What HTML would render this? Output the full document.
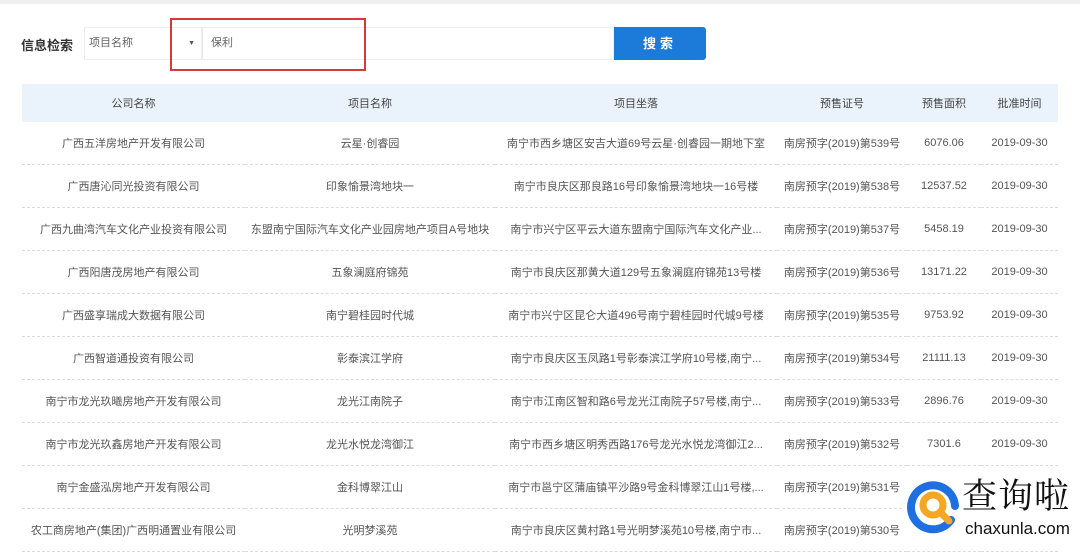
<!DOCTYPE html>
<html><head><meta charset="utf-8"><style>
body{margin:0;width:1080px;height:557px;background:#fff;overflow:hidden;font-family:"Liberation Sans","Noto Sans CJK SC",sans-serif;color:#555;position:relative}
.top{position:absolute;left:0;top:0;width:1080px;height:4px;background:#f0f0f0}
.lbl{position:absolute;left:21px;top:35px;font-size:13px;font-weight:bold;color:#333}
.sel{position:absolute;left:84px;top:27px;width:118px;height:33px;border:1px solid #eee;box-sizing:border-box;font-size:11px;color:#666;line-height:31px;padding-left:4px}
.sel span{position:absolute;right:6px;font-size:7px;color:#555}
.inp{position:absolute;left:202px;top:27px;width:412px;height:33px;border:1px solid #eee;border-left:1px solid #e6e6e6;box-sizing:border-box;font-size:11px;color:#666;line-height:31px;padding-left:8px}
.red{position:absolute;left:170px;top:18px;width:196px;height:53px;border:2px solid #d9363e;box-sizing:border-box}
.btn{position:absolute;left:614px;top:27px;width:92px;height:33px;background:#1c7ad9;border-radius:0 3px 3px 0;color:#fff;font-size:13px;font-weight:bold;text-align:center;line-height:33px;letter-spacing:4px}
table{position:absolute;left:22px;top:84px;width:1036px;border-collapse:collapse;font-size:11px}
th{background:#eaf3fb;height:38px;font-weight:normal;color:#444;padding:0}
td{height:42px;text-align:center;border-bottom:1px dashed #ddd;color:#555;padding:0;white-space:nowrap;overflow:hidden}
.logo{position:absolute;left:902px;top:468px;width:178px;height:80px;background:#fff;white-space:nowrap}
</style></head><body>
<div class="top"></div>
<div class="lbl">信息检索</div>
<div class="sel">项目名称<span>▼</span></div>
<div class="inp">保利</div>
<div class="red"></div>
<div class="btn">搜索</div>
<table>
<colgroup><col style="width:223px"><col style="width:250px"><col style="width:282px"><col style="width:130px"><col style="width:74px"><col style="width:77px"></colgroup>
<tr><th>公司名称</th><th>项目名称</th><th>项目坐落</th><th>预售证号</th><th>预售面积</th><th>批准时间</th></tr>
<tr><td>广西五洋房地产开发有限公司</td><td>云星·创睿园</td><td>南宁市西乡塘区安吉大道69号云星·创睿园一期地下室</td><td>南房预字(2019)第539号</td><td>6076.06</td><td>2019-09-30</td></tr>
<tr><td>广西唐沁同光投资有限公司</td><td>印象愉景湾地块一</td><td>南宁市良庆区那良路16号印象愉景湾地块一16号楼</td><td>南房预字(2019)第538号</td><td>12537.52</td><td>2019-09-30</td></tr>
<tr><td>广西九曲湾汽车文化产业投资有限公司</td><td>东盟南宁国际汽车文化产业园房地产项目A号地块</td><td>南宁市兴宁区平云大道东盟南宁国际汽车文化产业...</td><td>南房预字(2019)第537号</td><td>5458.19</td><td>2019-09-30</td></tr>
<tr><td>广西阳唐茂房地产有限公司</td><td>五象澜庭府锦苑</td><td>南宁市良庆区那黄大道129号五象澜庭府锦苑13号楼</td><td>南房预字(2019)第536号</td><td>13171.22</td><td>2019-09-30</td></tr>
<tr><td>广西盛享瑞成大数据有限公司</td><td>南宁碧桂园时代城</td><td>南宁市兴宁区昆仑大道496号南宁碧桂园时代城9号楼</td><td>南房预字(2019)第535号</td><td>9753.92</td><td>2019-09-30</td></tr>
<tr><td>广西智道通投资有限公司</td><td>彰泰滨江学府</td><td>南宁市良庆区玉凤路1号彰泰滨江学府10号楼,南宁...</td><td>南房预字(2019)第534号</td><td>21111.13</td><td>2019-09-30</td></tr>
<tr><td>南宁市龙光玖曦房地产开发有限公司</td><td>龙光江南院子</td><td>南宁市江南区智和路6号龙光江南院子57号楼,南宁...</td><td>南房预字(2019)第533号</td><td>2896.76</td><td>2019-09-30</td></tr>
<tr><td>南宁市龙光玖鑫房地产开发有限公司</td><td>龙光水悦龙湾御江</td><td>南宁市西乡塘区明秀西路176号龙光水悦龙湾御江2...</td><td>南房预字(2019)第532号</td><td>7301.6</td><td>2019-09-30</td></tr>
<tr><td>南宁金盛泓房地产开发有限公司</td><td>金科博翠江山</td><td>南宁市邕宁区蒲庙镇平沙路9号金科博翠江山1号楼,...</td><td>南房预字(2019)第531号</td><td></td><td></td></tr>
<tr><td>农工商房地产(集团)广西明通置业有限公司</td><td>光明梦溪苑</td><td>南宁市良庆区黄村路1号光明梦溪苑10号楼,南宁市...</td><td>南房预字(2019)第530号</td><td></td><td></td></tr>
</table>
<div class="logo">
<svg width="60" height="60" viewBox="0 0 60 60" style="position:absolute;left:3px;top:8px">
<path d="M46 44 A22 22 0 1 1 50 30" fill="none" stroke="#1f6fe0" stroke-width="8" stroke-linecap="round"/>
<circle cx="28" cy="29" r="10" fill="none" stroke="#f5a623" stroke-width="7"/>
<path d="M35 36 L44 45" stroke="#f5a623" stroke-width="7" stroke-linecap="round"/>
</svg>
<div style="position:absolute;left:60px;top:4px;font-size:35px;color:#111;font-family:'Noto Serif CJK SC',serif;line-height:44px;letter-spacing:1px">查询啦</div>
<div style="position:absolute;left:63px;top:50px;font-size:17px;color:#111;line-height:22px">chaxunla.com</div>
</div>
</body></html>
